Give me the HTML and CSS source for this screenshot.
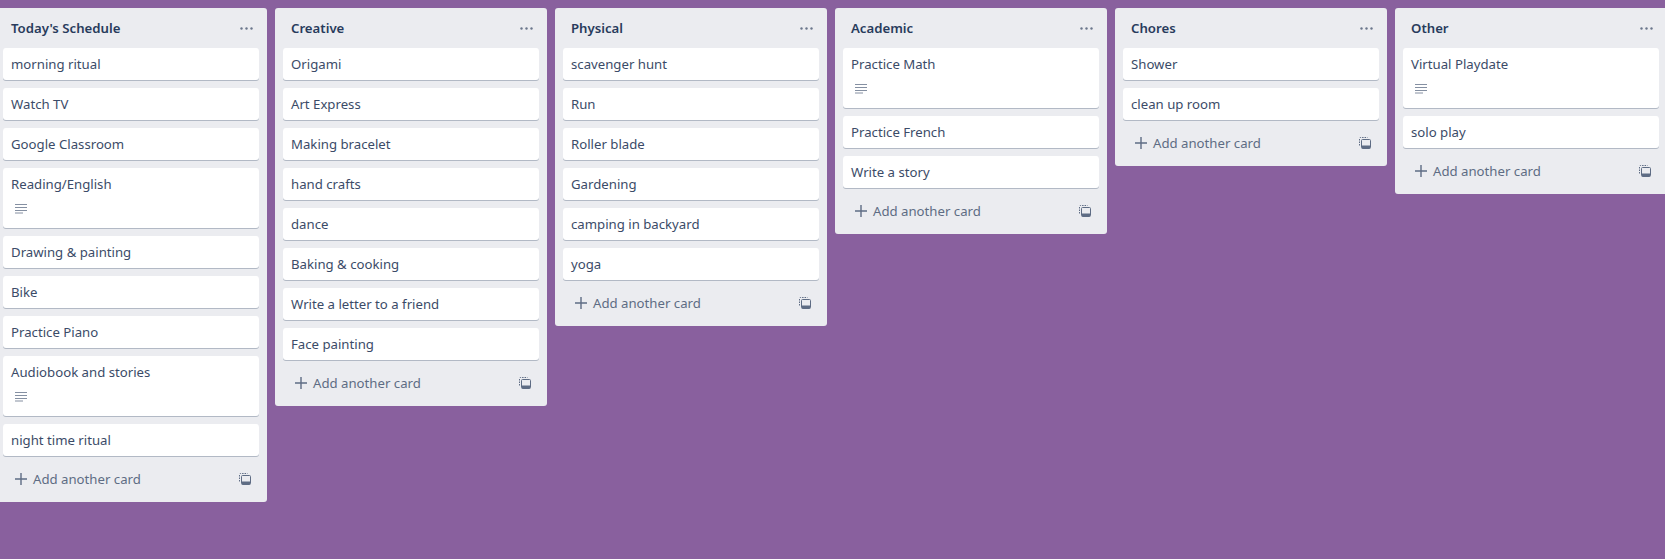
FILE: index.html
```html
<!DOCTYPE html>
<html lang="en">
<head>
    <meta charset="UTF-8">
    <meta name="viewport" content="width=device-width, initial-scale=1.0">
    <title>Board</title>
    <link rel="stylesheet" href="styles.css">
</head>
<body>
    <svg class="icon-defs" width="0" height="0" aria-hidden="true">
        <symbol id="icon-desc" viewBox="0 0 12 10">
            <path d="M0 0.5h12M0 3.5h12M0 6.5h12M0 9h8" fill="none" stroke="currentColor" stroke-width="1.2"/>
        </symbol>
        <symbol id="icon-plus" viewBox="0 0 12 12">
            <path d="M6 0v12M0 6h12" fill="none" stroke="currentColor" stroke-width="1.4"/>
        </symbol>
        <symbol id="icon-dots" viewBox="0 0 13 3">
            <circle cx="1.5" cy="1.5" r="1.2" fill="currentColor"/>
            <circle cx="6.5" cy="1.5" r="1.2" fill="currentColor"/>
            <circle cx="11.5" cy="1.5" r="1.2" fill="currentColor"/>
        </symbol>
        <symbol id="icon-template" viewBox="0 0 12 12">
            <path d="M0.5 8.5v-7a1 1 0 0 1 1-1h7" fill="none" stroke="currentColor" stroke-width="1" stroke-dasharray="1.5 1"/>
            <rect x="2.5" y="2.5" width="9" height="9" rx="1" fill="none" stroke="currentColor" stroke-width="1"/>
            <rect x="3" y="8.5" width="8" height="3" fill="currentColor"/>
        </symbol>
    </svg>

    <div class="board">
        <section class="list">
            <header class="list-header"><h2>Today's Schedule</h2><svg class="list-menu"><use href="#icon-dots"/></svg></header>
            <div class="card">morning ritual</div>
            <div class="card">Watch TV</div>
            <div class="card">Google Classroom</div>
            <div class="card">Reading/English<svg class="badge"><use href="#icon-desc"/></svg></div>
            <div class="card">Drawing &amp; painting</div>
            <div class="card">Bike</div>
            <div class="card">Practice Piano</div>
            <div class="card">Audiobook and stories<svg class="badge"><use href="#icon-desc"/></svg></div>
            <div class="card">night time ritual</div>
            <footer class="list-footer"><svg class="plus"><use href="#icon-plus"/></svg><span>Add another card</span><svg class="template"><use href="#icon-template"/></svg></footer>
        </section>

        <section class="list">
            <header class="list-header"><h2>Creative</h2><svg class="list-menu"><use href="#icon-dots"/></svg></header>
            <div class="card">Origami</div>
            <div class="card">Art Express</div>
            <div class="card">Making bracelet</div>
            <div class="card">hand crafts</div>
            <div class="card">dance</div>
            <div class="card">Baking &amp; cooking</div>
            <div class="card">Write a letter to a friend</div>
            <div class="card">Face painting</div>
            <footer class="list-footer"><svg class="plus"><use href="#icon-plus"/></svg><span>Add another card</span><svg class="template"><use href="#icon-template"/></svg></footer>
        </section>

        <section class="list">
            <header class="list-header"><h2>Physical</h2><svg class="list-menu"><use href="#icon-dots"/></svg></header>
            <div class="card">scavenger hunt</div>
            <div class="card">Run</div>
            <div class="card">Roller blade</div>
            <div class="card">Gardening</div>
            <div class="card">camping in backyard</div>
            <div class="card">yoga</div>
            <footer class="list-footer"><svg class="plus"><use href="#icon-plus"/></svg><span>Add another card</span><svg class="template"><use href="#icon-template"/></svg></footer>
        </section>

        <section class="list">
            <header class="list-header"><h2>Academic</h2><svg class="list-menu"><use href="#icon-dots"/></svg></header>
            <div class="card">Practice Math<svg class="badge"><use href="#icon-desc"/></svg></div>
            <div class="card">Practice French</div>
            <div class="card">Write a story</div>
            <footer class="list-footer"><svg class="plus"><use href="#icon-plus"/></svg><span>Add another card</span><svg class="template"><use href="#icon-template"/></svg></footer>
        </section>

        <section class="list">
            <header class="list-header"><h2>Chores</h2><svg class="list-menu"><use href="#icon-dots"/></svg></header>
            <div class="card">Shower</div>
            <div class="card">clean up room</div>
            <footer class="list-footer"><svg class="plus"><use href="#icon-plus"/></svg><span>Add another card</span><svg class="template"><use href="#icon-template"/></svg></footer>
        </section>

        <section class="list">
            <header class="list-header"><h2>Other</h2><svg class="list-menu"><use href="#icon-dots"/></svg></header>
            <div class="card">Virtual Playdate<svg class="badge"><use href="#icon-desc"/></svg></div>
            <div class="card">solo play</div>
            <footer class="list-footer"><svg class="plus"><use href="#icon-plus"/></svg><span>Add another card</span><svg class="template"><use href="#icon-template"/></svg></footer>
        </section>
    </div>
</body>
</html>
```

FILE: styles.css
```css
html, body {
    height: 100%;
}
body {
    margin: 0;
    overflow: hidden;
    background-color: #89609e;
    color: #172b4d;
    font-family: "Noto Sans", sans-serif;
    font-size: 13.2px;
    line-height: 20px;
}
.icon-defs {
    display: block;
}
.board {
    display: flex;
    align-items: flex-start;
    gap: 8px;
    margin: 8px 0 0 -5px;
    width: 1700px;
}
.list {
    flex: 0 0 272px;
    background: #ebecf0;
    border-radius: 3px;
    padding: 0 8px;
    box-sizing: border-box;
}
.list-header {
    display: flex;
    align-items: center;
    justify-content: space-between;
    height: 40px;
    padding: 0 6px 0 8px;
}
.list-header h2 {
    margin: 0;
    font-size: 13.2px;
    font-weight: 600;
    color: #283b5c;
}
.list-menu {
    width: 13px;
    height: 3px;
    color: #6b778c;
}
.card {
    background: #fff;
    border-radius: 3px;
    box-shadow: 0 1px 0 rgba(9, 30, 66, .25);
    padding: 6px 8px;
    margin-bottom: 8px;
    color: #3b4b68;
}
.card:nth-last-child(2) {
    margin-bottom: 0;
}
.badge {
    display: block;
    width: 12px;
    height: 10px;
    margin: 10px 0 8px 4px;
    color: #8590a2;
}
.list-footer {
    display: flex;
    align-items: center;
    height: 46px;
    padding: 0 8px 0 12px;
    color: #5e6c84;
}
.plus {
    width: 12px;
    height: 12px;
    margin-right: 6px;
}
.template {
    width: 12px;
    height: 12px;
    margin-left: auto;
}
```
